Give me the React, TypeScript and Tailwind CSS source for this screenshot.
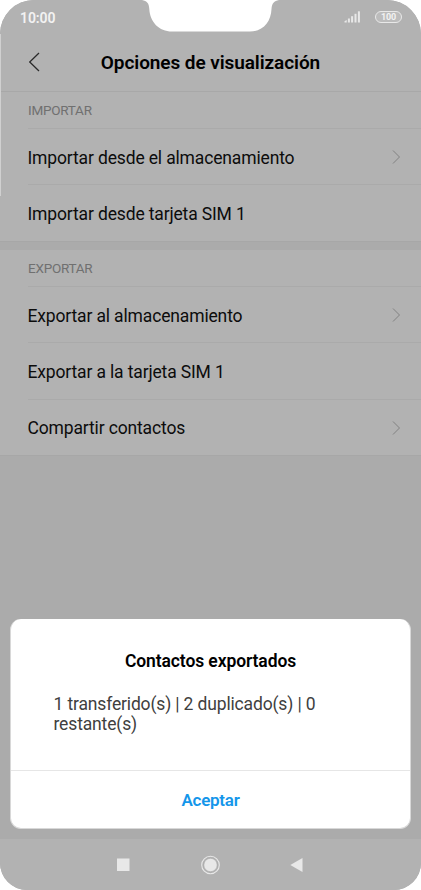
import clsx from "clsx"

type Item = { label: string; arrow?: boolean }
type Group = { title: string; items: Item[] }

const groups: Group[] = [
  {
    title: "IMPORTAR",
    items: [
      { label: "Importar desde el almacenamiento", arrow: true },
      { label: "Importar desde tarjeta SIM 1" },
    ],
  },
  {
    title: "EXPORTAR",
    items: [
      { label: "Exportar al almacenamiento", arrow: true },
      { label: "Exportar a la tarjeta SIM 1" },
      { label: "Compartir contactos", arrow: true },
    ],
  },
]

function Notch() {
  return (
    <svg className="absolute left-[140px] top-0" width="141" height="33" viewBox="0 0 141 33">
      <path
        d="M2 0C7 1 9 3 9.300 9C10 22 19 31.500 32 31.500H110C123 31.500 131 22 131.500 9C132 3 134 1 139 0Z"
        fill="#fff"
      />
    </svg>
  )
}

function StatusBar() {
  return (
    <div className="flex h-[35px] items-center justify-between pl-[20px] pr-[19px]">
      <span className="text-[14px] font-semibold leading-4 tracking-[-0.1px] text-[#f2f2f2]">10:00</span>
      <div className="flex items-center gap-[14px]">
        <svg className="-mt-px" width="17" height="12" viewBox="0 0 17 12" fill="#e8e8e8">
          <path d="M0.500 11.500V10.300L2.700 9V11.500Z" />
          <rect x="3.900" y="7.500" width="2" height="4" />
          <rect x="7.100" y="5.200" width="2" height="6.300" />
          <rect x="10.500" y="2.800" width="2" height="8.700" />
          <rect x="13.900" y="0.300" width="2" height="11.200" />
        </svg>
        <div className="-mt-px flex h-[12px] w-[27px] items-center justify-center rounded-full border border-[#e8e8e8] bg-[#bcbcbc] pt-px text-[9px] font-bold leading-none tracking-[-0.2px] text-[#f2f2f2]">
          100
        </div>
      </div>
    </div>
  )
}

function Header() {
  return (
    <div className="relative flex h-[56px] items-center justify-center">
      <svg
        className="absolute left-[28px] top-[17px]"
        width="13"
        height="20"
        viewBox="0 0 13 20"
        fill="none"
        stroke="#2b2b2b"
        strokeWidth="1.300"
      >
        <path d="M11 1L1.700 10L11 19" />
      </svg>
      <h1 className="text-[19px] font-semibold leading-6 tracking-[-0.08px] text-black">
        Opciones de visualización
      </h1>
    </div>
  )
}

function Section({ title, items }: Group) {
  return (
    <section className="bg-[#b2b2b2]">
      <h2 className="flex h-[36px] items-center pl-[28px] pt-px text-[13.5px] tracking-[-0.25px] text-[#707070]">
        {title}
      </h2>
      {items.map((item, i) => (
        <div
          key={item.label}
          className={clsx(
            "ml-[28px] flex items-center justify-between border-t border-[#aaaaaa] pr-[20px] pt-[2px]",
            i === 1 ? "h-[57px]" : "h-[56px]"
          )}
        >
          <span
            className={clsx(
              "ml-[-0.5px] text-[17.5px] tracking-[-0.15px] text-[#0c0c0c]",
              i === 0 && "pt-px"
            )}
          >
            {item.label}
          </span>
          {item.arrow && (
            <svg className="-mt-[2px]" width="9" height="14" viewBox="0 0 9 14" fill="none" stroke="#818181">
              <path d="M1 0.500L7.500 7L1 13.500" />
            </svg>
          )}
        </div>
      ))}
    </section>
  )
}

function ExportDialog() {
  return (
    <div className="absolute left-[10px] top-[619px] flex h-[210px] w-[401px] flex-col rounded-[11px] border border-t-0 border-[#d8d8d8] bg-white">
      <div className="flex-1 pt-[30px]">
        <h3 className="text-center text-[17.5px] font-semibold leading-6 tracking-[-0.1px] text-black">
          Contactos exportados
        </h3>
        <p className="mt-[21px] pl-[42.5px] pr-[60px] text-[17.5px] leading-5 tracking-[-0.15px] text-[#404040]">
          1 transferido(s) | 2 duplicado(s) | 0<br />
          restante(s)
        </p>
      </div>
      <button className="h-[58px] border-t border-[#e6e6e6] pt-[2px] text-[17px] font-semibold tracking-[-0.25px] text-[#1496ea]">
        Aceptar
      </button>
    </div>
  )
}

function NavBar() {
  return (
    <nav className="flex h-[51px] items-center bg-[#b2b2b2] pl-[116px]">
      <svg width="190" height="20" viewBox="0 0 190 20" fill="#e8e8e8">
        <rect x="1" y="3.500" width="12.500" height="12.500" />
        <circle cx="94.500" cy="10" r="8.800" fill="none" stroke="#e8e8e8" strokeWidth="1.100" />
        <circle cx="94.500" cy="10" r="6.700" stroke="#a0a0a0" strokeWidth="0.500" />
        <path d="M174.300 10L186.500 3V17Z" />
      </svg>
    </nav>
  )
}

export default function App() {
  return (
    <div className="h-[890px] w-[421px] overflow-hidden bg-white font-['Roboto',sans-serif]">
      <div className="relative flex h-full flex-col overflow-hidden rounded-b-[27px] rounded-t-[34px] bg-[#ababab]">
        <div className="h-[92px] border-b border-[#a8a8a8] bg-[#b2b2b2]">
          <StatusBar />
          <Header />
        </div>
        <Section {...groups[0]} />
        <div className="h-[9px] shrink-0 border-t border-[#a7a7a7]" />
        <Section {...groups[1]} />
        <div className="flex-1 border-t border-[#a7a7a7]" />
        <NavBar />
        <Notch />
        <div className="absolute left-0 top-[34px] h-[162px] w-px bg-[#d0d0d0]" />
        <ExportDialog />
      </div>
    </div>
  )
}
